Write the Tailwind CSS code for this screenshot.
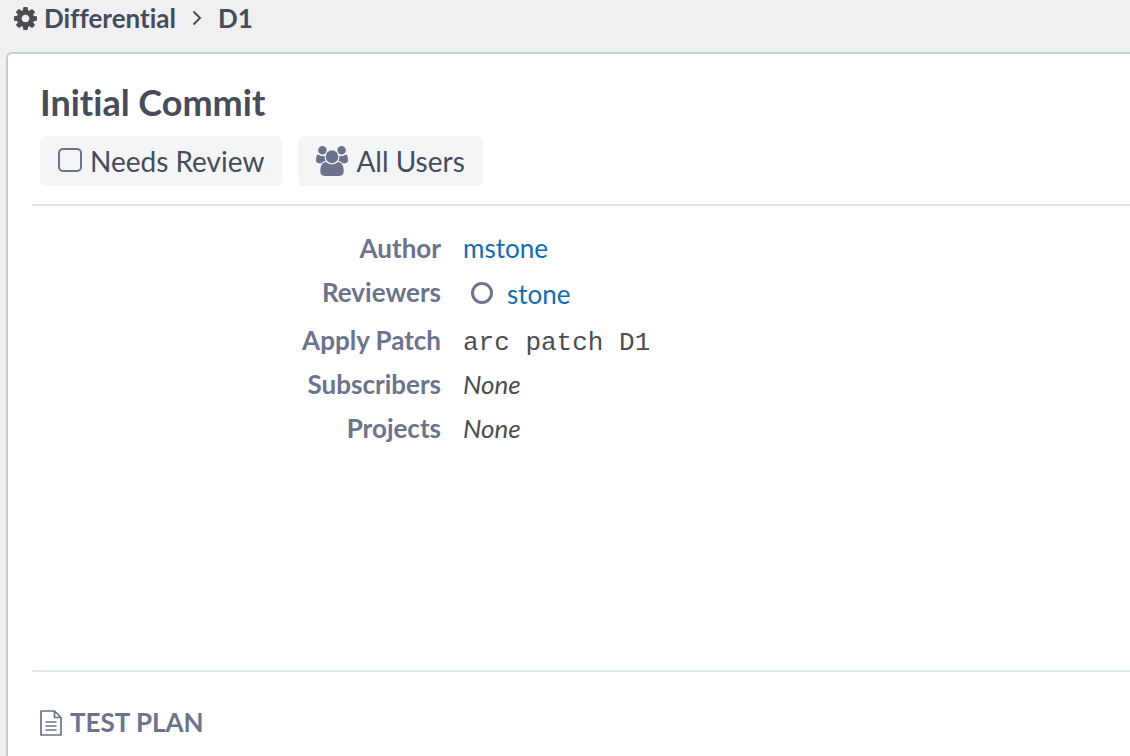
<!DOCTYPE html>
<html lang="en">
<head>
<meta charset="utf-8">
<meta name="viewport" content="width=device-width, initial-scale=1">
<title>D1 Initial Commit</title>
<script src="https://cdn.jsdelivr.net/npm/@tailwindcss/browser@4"></script>
</head>
<body class="flex min-h-screen flex-col overflow-x-hidden bg-[#f0f0f2] font-['Lato',sans-serif] text-[26px] text-[#464c5c] [font-variant-ligatures:none]">
<nav aria-label="Breadcrumb" class="flex h-[52px] items-start pl-[14px] pt-[2px] font-bold leading-8">
  <a href="#" class="flex items-start gap-[7px]">
    <svg class="mt-[5px] size-[23px] text-[#4b4d51]" viewBox="128 128 1536 1536" fill="currentColor" aria-hidden="true"><path d="M1152 896q0-106-75-181t-181-75-181 75-75 181 75 181 181 75 181-75 75-181zm512-109v222q0 12-8 23t-20 13l-185 28q-19 54-39 91 35 50 107 138 10 12 10 25t-9 23q-27 37-99 108t-94 71q-12 0-26-9l-138-108q-44 23-91 38-16 136-29 186-7 28-36 28h-222q-14 0-24.5-8.5t-11.5-21.5l-28-184q-49-16-90-37l-141 107q-10 9-25 9-14 0-25-11-126-114-165-168-7-10-7-23 0-12 8-23 15-21 51-66.5t54-70.5q-27-50-41-99l-183-27q-13-2-21-12.5t-8-23.5v-222q0-12 8-23t19-13l186-28q14-46 39-92-40-57-107-138-10-12-10-24 0-10 9-23 26-36 98.5-107.5t94.5-71.5q13 0 26 10l138 107q44-23 91-38 16-136 29-186 7-28 36-28h222q14 0 24.5 8.5t11.5 21.5l28 184q49 16 90 37l142-107q9-9 24-9 13 0 25 10 129 119 165 170 7 8 7 22 0 12-8 23-15 21-51 66.5t-54 70.5q26 50 41 98l183 28q13 2 21 12.5t8 23.5z"/></svg>
    <span>Differential</span>
  </a>
  <svg class="ml-4 mr-4 mt-2 h-4 w-[10px] text-[#4b4d51]" viewBox="0 0 10 16" fill="none" stroke="currentColor" stroke-width="2" aria-hidden="true"><path d="M1.5 1.500 8 8l-6.500 6.500"/></svg>
  <span>D1</span>
</nav>
<main class="ml-[6px] flex grow flex-col rounded-tl-md border-l-2 border-t-2 border-[#bfcfda] bg-white pl-6">
  <header class="border-b-2 border-[#dee7ee] pb-[18px] pl-2 pt-[26px]">
    <h1 class="text-[36px] font-bold leading-[44px]">Initial Commit</h1>
    <div class="mt-3 flex gap-4 text-[28px] leading-[50px]">
      <span class="flex items-center gap-2 rounded-md bg-[#f3f5f7] px-[18px]">
        <svg class="mb-[2px] size-6 text-[#6b748c]" viewBox="0 0 24 24" fill="none" stroke="currentColor" stroke-width="2" aria-hidden="true"><rect x="1" y="1" width="22" height="22" rx="4"/></svg>
        <span>Needs Review</span>
      </span>
      <a href="#" class="flex items-center gap-2 rounded-md bg-[#f3f5f7] px-[18px]">
        <svg class="h-[30px] w-8 text-[#6b748c]" viewBox="64 0 1920 1792" fill="currentColor" aria-hidden="true"><path d="M657 896q-162 5-265 128h-134q-82 0-138-40.5t-56-118.5q0-353 124-353 6 0 43.5 21t97.5 42.500 119 21.500q67 0 133-23-5 37-5 66 0 139 81 256zm1071 637q0 120-73 189.500t-194 69.500h-874q-121 0-194-69.500t-73-189.500q0-53 3.500-103.500t14-109 26.500-108.500 43-97.500 62-81 85.500-53.500 111.500-20q10 0 43 21.500t73 48 107 48 135 21.500 135-21.500 107-48 73-48 43-21.500q61 0 111.500 20t85.500 53.500 62 81 43 97.500 26.500 108.500 14 109 3.500 103.500zm-1024-1277q0 106-75 181t-181 75-181-75-75-181 75-181 181-75 181 75 75 181zm704 384q0 159-112.500 271.500t-271.500 112.500-271.500-112.500-112.500-271.500 112.500-271.500 271.500-112.500 271.500 112.500 112.500 271.500zm576 225q0 78-56 118.500t-138 40.500h-134q-103-123-265-128 81-117 81-256 0-29-5-66 66 23 133 23 59 0 119-21.500t97.500-42.500 43.500-21q124 0 124 353zm-128-609q0 106-75 181t-181 75-181-75-75-181 75-181 181-75 181 75 75 181z"/></svg>
        <span>All Users</span>
      </a>
    </div>
  </header>
  <dl class="grid min-h-[464px] grid-cols-[409px_1fr] content-start gap-x-[22px] pt-5 leading-[44px] [&>dt]:text-right [&>dt]:font-bold [&>dt]:text-[#6b748c]">
    <dt>Author</dt>
    <dd><a href="#" class="text-[#136cb2]">mstone</a></dd>
    <dt>Reviewers</dt>
    <dd class="flex items-start pb-[2px] pl-2 pt-[2px]">
      <svg class="mr-[14px] mt-[10px] size-[22px] text-[#6b748c]" viewBox="0 0 22 22" fill="none" stroke="currentColor" stroke-width="3" role="img" aria-label="Review requested"><circle cx="11" cy="11" r="9.500"/></svg>
      <a href="#" class="text-[#136cb2]">stone</a>
    </dd>
    <dt>Apply Patch</dt>
    <dd class="h-[44px] pt-[3px] font-['Liberation_Mono',monospace] text-[#4b4d51]">arc patch D1</dd>
    <dt>Subscribers</dt>
    <dd class="italic text-[#4b4d51]">None</dd>
    <dt>Projects</dt>
    <dd class="italic text-[#4b4d51]">None</dd>
  </dl>
  <section class="border-t-2 border-[#dee7ee] pl-2 pt-[34px] text-[#6b748c]">
    <h2 class="flex items-start gap-2 font-bold leading-8">
      <svg class="mt-1 h-[26px] w-[22px]" viewBox="0 0 22 26" fill="none" stroke="currentColor" stroke-width="1.700" stroke-linejoin="round" aria-hidden="true"><path d="M1 1h13.500L21 7.500V25H1zM14.500 1v6.500H21M5.500 12h11M5.500 16h11M5.500 20h11"/></svg>
      <span>TEST PLAN</span>
    </h2>
  </section>
</main>
</body>
</html>
